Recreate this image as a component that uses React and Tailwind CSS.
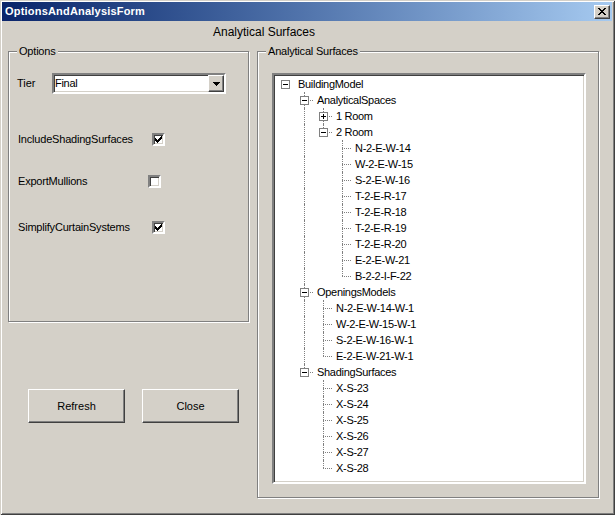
import React from 'react';

const TREE = {
  label: 'BuildingModel',
  children: [
    {
      label: 'AnalyticalSpaces',
      children: [
        { label: '1 Room', collapsed: true },
        {
          label: '2 Room',
          children: ['N-2-E-W-14', 'W-2-E-W-15', 'S-2-E-W-16', 'T-2-E-R-17', 'T-2-E-R-18', 'T-2-E-R-19', 'T-2-E-R-20', 'E-2-E-W-21', 'B-2-2-I-F-22'].map(l => ({ label: l })),
        },
      ],
    },
    {
      label: 'OpeningsModels',
      children: ['N-2-E-W-14-W-1', 'W-2-E-W-15-W-1', 'S-2-E-W-16-W-1', 'E-2-E-W-21-W-1'].map(l => ({ label: l })),
    },
    {
      label: 'ShadingSurfaces',
      children: ['X-S-23', 'X-S-24', 'X-S-25', 'X-S-26', 'X-S-27', 'X-S-28'].map(l => ({ label: l })),
    },
  ],
};

// flatten the tree into rows with guide info for the dotted lines
function flatten(node, level = 0, guides = [], isLast = true, out = []) {
  const hasKids = node.collapsed || (node.children && node.children.length > 0);
  out.push({ label: node.label, level, guides, isLast, box: hasKids ? (node.collapsed ? 'plus' : 'minus') : null });
  if (node.children && !node.collapsed) {
    const next = level === 0 ? [false] : [...guides, !isLast];
    node.children.forEach((c, i) => flatten(c, level + 1, next, i === node.children.length - 1, out));
  }
  return out;
}

const ROWS = flatten(TREE);

const raised = 'border-t border-l border-white border-r border-b border-r-[#404040] border-b-[#404040] shadow-[inset_-1px_-1px_0_#808080]';
const sunken = 'border-2 border-t-[#808080] border-l-[#808080] border-r-white border-b-white shadow-[inset_1px_1px_0_#404040,inset_-1px_-1px_0_#D4D0C8]';

function TreeRow({ row }) {
  return (
    <div className="flex h-[16px] items-center">
      {row.guides.map((g, i) => (
        <div key={i} className="relative w-[19px] h-full shrink-0">
          {g && <div className="absolute left-[9px] top-0 h-[16px] w-0 border-l border-dotted border-[#808080]" />}
        </div>
      ))}
      <div className="relative w-[19px] h-full shrink-0">
        {row.level > 0 && (
          <>
            <div className="absolute left-[9px] top-0 h-[8px] w-0 border-l border-dotted border-[#808080]" />
            {!row.isLast && <div className="absolute left-[9px] top-[8px] h-[8px] w-0 border-l border-dotted border-[#808080]" />}
            <div className="absolute left-[9px] top-[8px] w-[9px] h-0 border-t border-dotted border-[#808080]" />
          </>
        )}
        {row.box && (
          <div className="absolute left-[5px] top-[4px] w-[9px] h-[9px] border border-[#808080] bg-white">
            <div className="absolute left-[1px] top-[3px] w-[5px] h-px bg-black" />
            {row.box === 'plus' && <div className="absolute left-[3px] top-[1px] w-px h-[5px] bg-black" />}
          </div>
        )}
      </div>
      <span className="ml-[3px] whitespace-nowrap text-[11px] leading-none tracking-[-0.3px]">{row.label}</span>
    </div>
  );
}

function CheckBox({ checked }) {
  return (
    <div className={`w-[13px] h-[13px] bg-white shrink-0 relative ${sunken}`}>
      {checked && (
        <svg className="absolute left-[1px] top-[1px]" width="7" height="7" viewBox="0 0 7 7" shapeRendering="crispEdges">
          <polygon points="0,2 2,4 6,0 7,0 7,3 2,7 0,5" fill="#000" />
        </svg>
      )}
    </div>
  );
}

function GroupBox({ title, className, children }) {
  return (
    <div className={`relative border border-[#808080] shadow-[1px_1px_0_#fff,inset_1px_1px_0_#fff] ${className}`}>
      <span className="absolute left-[8px] top-[-8px] bg-[#D4D0C8] px-[2px] text-[11px] leading-[14px] tracking-[-0.2px]">{title}</span>
      {children}
    </div>
  );
}

export default function App() {
  return (
    <div className="w-[615px] h-[515px] bg-[#D4D0C8] pt-[2px] pl-[2px] pr-[3px] text-black shadow-[inset_1px_1px_0_#D4D0C8,inset_-1px_-1px_0_#404040,inset_2px_2px_0_#fff,inset_-2px_-2px_0_#808080]" style={{ fontFamily: '"Liberation Sans", Arial, sans-serif' }}>
      {/* Title bar */}
      <div className="h-[19px] flex items-center justify-between bg-linear-to-r from-[#0A246A] to-[#A6CAF0] pl-[3px] pr-[2px]">
        <span className="text-white font-bold text-[11px] tracking-[0.2px]">OptionsAndAnalysisForm</span>
        <div className={`w-[16px] h-[14px] bg-[#D4D0C8] flex items-center justify-center ${raised}`}>
          <svg width="8" height="7" viewBox="0 0 8 7" shapeRendering="crispEdges">
            <path d="M0 0h2v1h1v1h2V1h1V0h2v1H7v1H6v1H5v1h1v1h1v1h1v1H6V6H5V5H3v1H2v1H0V6h1V5h1V4h1V3H2V2H1V1H0z" fill="#000" />
          </svg>
        </div>
      </div>

      <div className="mt-[3px] h-[16px] leading-[16px] text-[12px] pl-[211px]">Analytical Surfaces</div>

      <div className="mt-[11px] flex pl-[6px]">
        {/* left column */}
        <div className="w-[242px] shrink-0">
          <GroupBox title="Options" className="w-[241px] h-[271px]">
            <div className="mt-[21px] flex items-center pl-[8px]">
              <span className="w-[35px] text-[11px]">Tier</span>
              <div className={`w-[174px] h-[21px] bg-white flex items-center justify-between ${sunken}`}>
                <span className="pl-[1px] text-[11px] tracking-[-0.3px]">Final</span>
                <div className={`w-[16px] h-[17px] bg-[#D4D0C8] flex items-center justify-center ${raised}`}>
                  <svg width="7" height="4" viewBox="0 0 7 4" shapeRendering="crispEdges">
                    <polygon points="0,0 7,0 3.5,4" fill="#000" />
                  </svg>
                </div>
              </div>
            </div>
            <div className="mt-[39px] flex items-center pl-[9px] h-[13px]">
              <span className="w-[134px] text-[11px] tracking-[-0.2px]">IncludeShadingSurfaces</span>
              <CheckBox checked />
            </div>
            <div className="mt-[29px] flex items-center pl-[9px] h-[13px]">
              <span className="w-[130px] text-[11px] tracking-[-0.2px]">ExportMullions</span>
              <CheckBox />
            </div>
            <div className="mt-[33px] flex items-center pl-[9px] h-[13px]">
              <span className="w-[134px] text-[11px] tracking-[-0.2px]">SimplifyCurtainSystems</span>
              <CheckBox checked />
            </div>
          </GroupBox>

          <div className="mt-[67px] flex pl-[20px] gap-[17px]">
            <button className={`w-[97px] h-[34px] bg-[#D4D0C8] text-[11px] ${raised}`}>Refresh</button>
            <button className={`w-[97px] h-[34px] bg-[#D4D0C8] text-[11px] ${raised}`}>Close</button>
          </div>
        </div>

        {/* right group with tree */}
        <GroupBox title="Analytical Surfaces" className="ml-[7px] w-[342px] h-[447px]">
          <div className={`ml-[14px] mt-[21px] w-[314px] h-[411px] bg-white pt-px pl-[2px] ${sunken}`}>
            {ROWS.map((r, i) => <TreeRow key={i} row={r} />)}
          </div>
        </GroupBox>
      </div>
    </div>
  );
}
